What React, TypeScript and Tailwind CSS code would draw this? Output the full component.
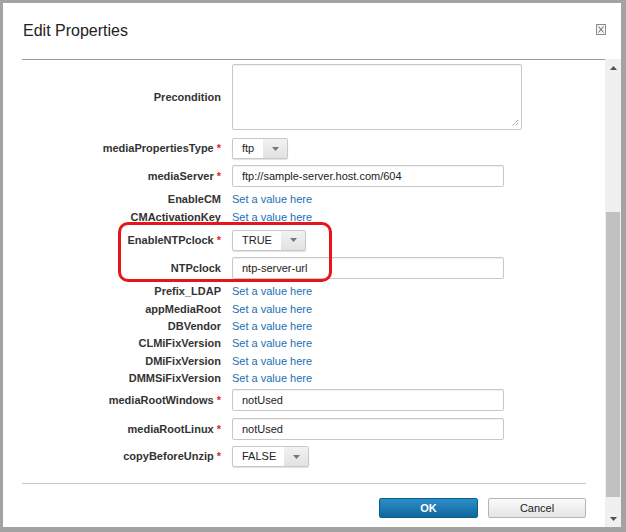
import React from 'react';

const FONT = { fontFamily: '"Liberation Sans", Arial, sans-serif' };

const Label: React.FC<{ text: string; required?: boolean }> = ({ text, required }) => (
  <div className="w-[229px] shrink-0 pr-[11px] text-right text-[11px] font-bold text-[#333]">
    {text}
    {required && <span className="ml-[3px] text-[#e0272c]">*</span>}
  </div>
);

const LinkRow: React.FC<{ label: string }> = ({ label }) => (
  <div className="flex h-[17.4px] items-center">
    <Label text={label} />
    <a className="text-[11px] text-[#1a6fb5]">Set a value here</a>
  </div>
);

const TextInput: React.FC<{ label: string; value: string; required?: boolean; className: string }> = ({
  label,
  value,
  required,
  className,
}) => (
  <div className={`flex items-center ${className}`}>
    <Label text={label} required={required} />
    <div className="flex h-full w-[272px] items-center rounded-[2px] border border-[#c8c8c8] bg-white pl-[9px] text-[11px] text-[#222] shadow-[inset_0_1px_1px_rgba(0,0,0,0.06)]">
      {value}
    </div>
  </div>
);

const Select: React.FC<{ label: string; value: string; required?: boolean; className: string; boxW: string }> = ({
  label,
  value,
  required,
  className,
  boxW,
}) => (
  <div className={`flex h-[21px] items-center ${className}`}>
    <Label text={label} required={required} />
    <div
      className={`flex h-full ${boxW} overflow-hidden rounded-[2px] border border-[#c8c8c8] bg-white shadow-[0_1px_1px_rgba(0,0,0,0.12)]`}
    >
      <div className="flex flex-1 items-center pl-[9px] text-[11px] text-[#222]">{value}</div>
      <div className="flex w-[24px] items-center justify-center bg-gradient-to-b from-[#f2f2f2] to-[#e2e2e2]">
        <svg width="7" height="4" viewBox="0 0 7 4">
          <path d="M0 0 L7 0 L3.5 4 Z" fill="#777" />
        </svg>
      </div>
    </div>
  </div>
);

export default function App() {
  return (
    <div style={FONT} className="h-[532px] w-[626px] bg-white">
      <div className="flex h-full w-full flex-col border-t-[3px] border-r-[5px] border-b-[5px] border-l-[3px] border-[#a3a3a3]">
        {/* Header */}
        <div className="flex h-[56px] shrink-0 items-center justify-between pr-[15px] pl-[20px]">
          <h2 className="text-[16px] text-[#222]">Edit Properties</h2>
          <div className="relative mt-[-3px] flex h-[11px] w-[10px] items-center justify-center border border-[#8a8a8a] bg-[#f4f4f4]">
            <svg width="6" height="7" viewBox="0 0 6 7">
              <path d="M0.5 0.5 L5.5 6.5 M5.5 0.5 L0.5 6.5" stroke="#666" strokeWidth="1" />
            </svg>
          </div>
        </div>

        <div className="flex min-h-0 flex-1">
          {/* Body */}
          <div className="flex min-w-0 flex-1 flex-col">
            <div className="ml-[19px] h-px bg-[#9c9c9c]" />
            <div className="relative flex flex-col pt-[4px]">
              {/* Precondition */}
              <div className="flex h-[66px] items-center">
                <Label text="Precondition" />
                <div className="relative h-full w-[290px] rounded-[2px] border border-[#c8c8c8] bg-white shadow-[inset_0_1px_1px_rgba(0,0,0,0.06)]">
                  <svg className="absolute right-[2px] bottom-[2px]" width="8" height="8" viewBox="0 0 8 8">
                    <path d="M7 1 L1 7 M7 4 L4 7" stroke="#777" strokeWidth="1" strokeDasharray="1 1" />
                  </svg>
                </div>
              </div>

              <Select label="mediaPropertiesType" value="ftp" required className="mt-[8px]" boxW="w-[56px]" />
              <TextInput
                label="mediaServer"
                value="ftp://sample-server.host.com/604"
                required
                className="mt-[6px] h-[22px]"
              />

              <div className="mt-[4px]">
                <LinkRow label="EnableCM" />
                <LinkRow label="CMActivationKey" />
              </div>

              <Select label="EnableNTPclock" value="TRUE" required className="mt-[4px]" boxW="w-[74px]" />
              <TextInput label="NTPclock" value="ntp-server-url" className="mt-[6px] h-[22px]" />

              <div className="mt-[4px]">
                <LinkRow label="Prefix_LDAP" />
                <LinkRow label="appMediaRoot" />
                <LinkRow label="DBVendor" />
                <LinkRow label="CLMiFixVersion" />
                <LinkRow label="DMiFixVersion" />
                <LinkRow label="DMMSiFixVersion" />
              </div>

              <TextInput label="mediaRootWindows" value="notUsed" required className="mt-[2px] h-[22px]" />
              <TextInput label="mediaRootLinux" value="notUsed" required className="mt-[7px] h-[22px]" />
              <Select label="copyBeforeUnzip" value="FALSE" required className="mt-[6px]" boxW="w-[77px]" />

              {/* highlight */}
              <div className="pointer-events-none absolute top-[162px] left-[115px] h-[60px] w-[214px] rounded-[10px] border-[3px] border-[#e8141b]" />
            </div>

            {/* Footer */}
            <div className="mt-[16px] mr-[19px] ml-[19px] h-px bg-[#c8c8c8]" />
            <div className="mt-[14px] mr-[19px] flex justify-end gap-[10px]">
              <button className="h-[20px] w-[99px] rounded-[2px] border border-[#0d5d8c] bg-gradient-to-b from-[#2d8ec8] to-[#0e679d] text-[11px] font-bold text-white">
                OK
              </button>
              <button className="h-[20px] w-[98px] rounded-[2px] border border-[#b4b4b4] bg-gradient-to-b from-[#fbfbfb] to-[#e4e4e4] text-[11px] text-[#222]">
                Cancel
              </button>
            </div>
          </div>

          {/* Scrollbar */}
          <div className="flex w-[16px] shrink-0 flex-col items-center bg-[#f0f0f0]">
            <div className="flex h-[17px] items-center justify-center">
              <svg width="7" height="4" viewBox="0 0 7 4">
                <path d="M3.5 0 L7 4 L0 4 Z" fill="#505050" />
              </svg>
            </div>
            <div className="mt-[136px] h-[285px] w-[14px] bg-[#c1c1c1]" />
            <div className="mt-auto flex h-[17px] items-center justify-center">
              <svg width="7" height="4" viewBox="0 0 7 4">
                <path d="M0 0 L7 0 L3.5 4 Z" fill="#505050" />
              </svg>
            </div>
          </div>
        </div>
      </div>
    </div>
  );
}
